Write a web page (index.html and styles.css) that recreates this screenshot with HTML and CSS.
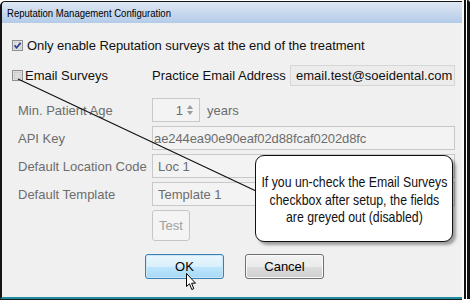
FILE: index.html
```html
<!DOCTYPE html>
<html>
<head>
<meta charset="utf-8">
<link rel="stylesheet" href="styles.css">
</head>
<body>
<div class="screen">
  <div class="dialog">
    <div class="titlebar"><span class="title-text">Reputation Management Configuration</span></div>
    <div class="content">
      <div class="row row-first">
        <svg class="cb" width="11" height="11" viewBox="0 0 11 11">
          <rect x="0.5" y="0.5" width="10" height="10" fill="#f4f4f4" stroke="#8e8f8f"/>
          <rect x="2" y="2" width="7" height="7" fill="#e4e4e4" stroke="#bdbdbd" stroke-width="0.8"/>
          <path d="M2.6 5.4 L4.6 7.7 L8.6 2.9" fill="none" stroke="#2b3f8f" stroke-width="1.7"/>
        </svg>
        <span class="cb-label first-label">Only enable Reputation surveys at the end of the treatment</span>
      </div>
      <div class="row row-email">
        <svg class="cb" width="11" height="11" viewBox="0 0 11 11">
          <rect x="0.5" y="0.5" width="10" height="10" fill="#f4f4f4" stroke="#8e8f8f"/>
          <rect x="2" y="2" width="7" height="7" fill="#dcdcdc" stroke="#bdbdbd" stroke-width="0.8"/>
        </svg>
        <span class="cb-label email-label">Email Surveys</span>
        <span class="practice">Practice Email Address</span>
        <span class="email-box">email.test@soeidental.com</span>
      </div>
      <div class="form">
        <span class="lbl">Min. Patient Age</span>
        <div class="age">
          <div class="spin"><span class="spin-val">1</span>
            <svg width="8" height="14" viewBox="0 0 8 14"><path d="M4 2 L7 6 L1 6 Z" fill="#9a9a9a"/><path d="M1 8 L7 8 L4 12 Z" fill="#9a9a9a"/></svg>
          </div>
          <span class="years">years</span>
        </div>
        <span class="lbl">API Key</span>
        <div class="field api">ae244ea90e90eaf02d88fcaf0202d8fc</div>
        <span class="lbl">Default Location Code</span>
        <div class="field">Loc 1</div>
        <span class="lbl">Default Template</span>
        <div class="field">Template 1</div>
        <span></span>
        <div class="test-wrap"><span class="test-btn">Test</span></div>
      </div>
      <div class="buttons">
        <span class="btn btn-ok">OK</span>
        <span class="btn btn-cancel">Cancel</span>
      </div>
    </div>
  </div>
  <div class="edge e-light"></div>
  <div class="edge e-dark1"></div>
  <div class="edge e-white"></div>
  <div class="edge e-dark2"></div>

  <svg class="pointer-line" width="472" height="302" viewBox="0 0 472 302">
    <line x1="18" y1="79" x2="256" y2="191" stroke="#111" stroke-width="1.2"/>
  </svg>
  <div class="callout">
    <span class="c-line">If you un-check the Email Surveys</span>
    <span class="c-line">checkbox after setup, the fields</span>
    <span class="c-line">are greyed out (disabled)</span>
  </div>
  <svg class="cursor" width="12" height="18" viewBox="0 0 12 18">
    <path d="M0.5 0.5 L0.5 13.5 L3.5 10.8 L5.8 16.5 L7.8 15.6 L5.6 10.2 L9.5 10.2 Z" fill="#fff" stroke="#000" stroke-width="1"/>
  </svg>
</div>
</body>
</html>
```

FILE: styles.css
```css
html, body {
  margin: 0;
  padding: 0;
  background: #ffffff;
}

.screen {
  position: relative;
  width: 472px;
  height: 302px;
  display: flex;
  align-items: flex-start;
  background: #ffffff;
  font-family: "Liberation Sans", Arial, sans-serif;
  font-size: 13px;
  color: #111;
  overflow: hidden;
}

.dialog {
  width: 460px;
  height: 295px;
  margin-top: 1px;
  display: flex;
  flex-direction: column;
  border-left: 2px solid #151515;
  border-top: 1px solid #151515;
  border-bottom: 2px solid #1e8c9a;
  border-top-left-radius: 5px;
  box-shadow: 0 1px 0 #1a1a1a;
  background: #f0f0f0;
}

.titlebar {
  height: 21px;
  display: flex;
  align-items: center;
  padding-left: 5px;
  background: linear-gradient(#dfe8f3, #c4d6ec 60%, #b3cbe8);
  border-top-left-radius: 4px;
}

.title-text {
  display: inline-block;
  white-space: nowrap;
  font-family: "Liberation Sans", Arial, sans-serif;
  font-size: 11.5px;
  color: #000;
  transform: scaleX(0.83);
  transform-origin: left center;
}

.content {
  flex: 1;
  display: flex;
  flex-direction: column;
  padding: 12px 0 0 10px;
}

.row {
  display: flex;
  align-items: center;
}

.row-first {
  height: 20px;
}

.row-email {
  height: 21px;
  margin-top: 10px;
}

.cb {
  flex: none;
  display: block;
}

.cb-label {
  white-space: nowrap;
}

.first-label {
  margin-left: 4px;
  letter-spacing: -0.05px;
}

.email-label {
  margin-left: 2px;
  width: 127px;
}

.practice {
  width: 138px;
}

.email-box {
  height: 21px;
  box-sizing: border-box;
  width: 165px;
  display: flex;
  align-items: center;
  padding-left: 5px;
  background: #ececec;
  border: 1px solid #d6d6d6;
  color: #111;
}

.form {
  margin-top: 12px;
  margin-left: 6px;
  display: grid;
  grid-template-columns: 134px 303px;
  grid-auto-rows: 24px;
  row-gap: 4px;
  align-items: center;
}

.lbl {
  color: #6d6d6d;
}

.age {
  display: flex;
  align-items: center;
  height: 24px;
}

.spin {
  width: 48px;
  height: 24px;
  box-sizing: border-box;
  border: 1px solid #c8c8c8;
  background: #f3f3f3;
  display: flex;
  align-items: center;
  justify-content: flex-end;
  padding-right: 5px;
  color: #6d6d6d;
}

.spin-val {
  margin-right: 3px;
}

.years {
  margin-left: 7px;
  color: #6d6d6d;
}

.field {
  height: 24px;
  box-sizing: border-box;
  border: 1px solid #c8c8c8;
  background: #f3f3f3;
  display: flex;
  align-items: center;
  padding-left: 5px;
  color: #6d6d6d;
}

.api {
  padding-left: 1px;
  letter-spacing: -0.1px;
}

.test-wrap {
  align-self: start;
}

.test-btn {
  display: flex;
  align-items: center;
  justify-content: center;
  width: 38px;
  height: 31px;
  box-sizing: border-box;
  border: 1px solid #c6c6c6;
  border-radius: 3px;
  background: #f4f4f4;
  color: #a0a0a0;
}

.buttons {
  display: flex;
  margin-top: 20px;
  margin-left: 133px;
  gap: 21px;
}

.btn {
  display: flex;
  align-items: center;
  justify-content: center;
  width: 79px;
  height: 25px;
  box-sizing: border-box;
  border-radius: 3px;
  font-size: 13px;
  color: #000;
}

.btn-ok {
  border: 1px solid #3c7fb1;
  background: linear-gradient(#eaf6fd, #d9f0fc 50%, #bee6fd 51%, #a7d9f5);
  box-shadow: inset 0 0 0 1px #c9e7f9;
}

.btn-cancel {
  border: 1px solid #707070;
  background: linear-gradient(#f2f2f2, #ebebeb 50%, #dddddd 51%, #cfcfcf);
  box-shadow: inset 0 0 0 1px #fbfbfb;
}

.edge {
  height: 299px;
  flex: none;
}

.e-light {
  width: 2px;
  background: #fafafa;
}

.e-dark1 {
  width: 2px;
  background: #111;
}

.e-white {
  width: 1px;
  background: #ffffff;
}

.e-dark2 {
  width: 3px;
  background: #111;
  border-top-right-radius: 3px;
}

.pointer-line {
  position: absolute;
  left: 0;
  top: 0;
}

.callout {
  position: absolute;
  left: 255px;
  top: 155px;
  width: 198px;
  height: 87px;
  box-sizing: border-box;
  border: 1.5px solid #111;
  border-radius: 9px;
  background: #ffffff;
  box-shadow: 3px 3px 3px rgba(0, 0, 0, 0.35);
  display: flex;
  flex-direction: column;
  align-items: center;
  justify-content: center;
  padding-top: 2px;
  font-family: "Liberation Sans", Arial, sans-serif;
  font-size: 15px;
  line-height: 17.5px;
  color: #111;
}

.c-line {
  display: block;
  white-space: nowrap;
  transform: scaleX(0.82);
}

.cursor {
  position: absolute;
  left: 186px;
  top: 273px;
}
```
